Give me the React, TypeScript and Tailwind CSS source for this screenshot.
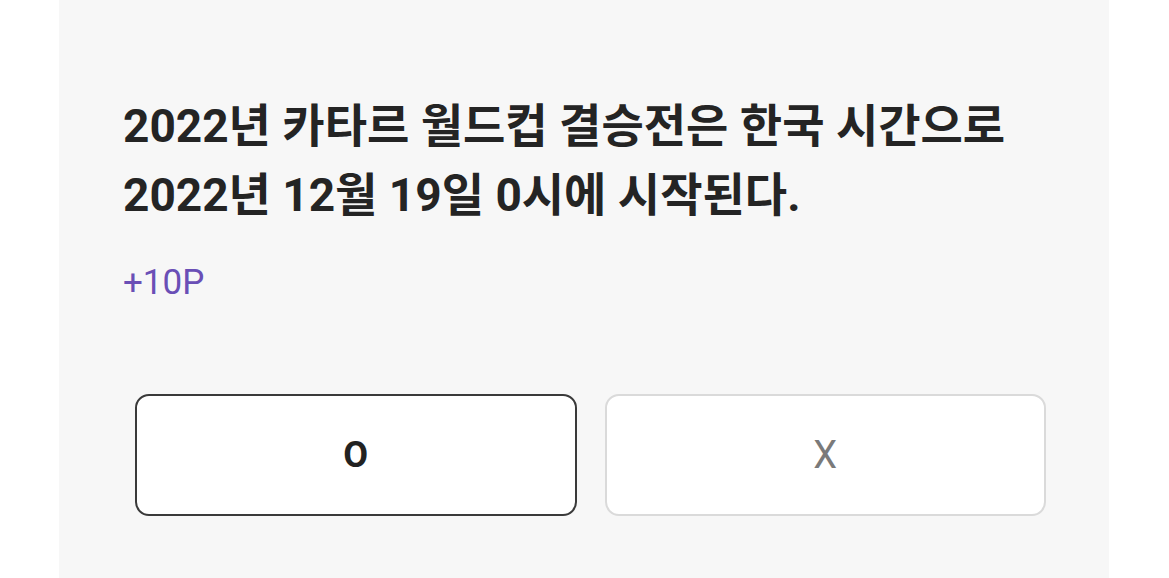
export default function App() {
  return (
    <div className="w-full h-[578px] bg-white flex justify-center">
      <div
        className="w-[1050px] h-full bg-[#f7f7f7] pt-[92px] pl-[64px] pr-[63px] ml-[-1px]"
        style={{ fontFamily: 'Roboto, "Noto Sans CJK KR", sans-serif' }}
      >
        {/* Question */}
        <h1 className="text-[46px] leading-[69px] font-bold text-[#242424] whitespace-nowrap">
          <span className="block">2022년 카타르 월드컵 결승전은 한국 시간으로</span>
          <span className="block">2022년 12월 19일 0시에 시작된다.</span>
        </h1>

        <p className="mt-[33px] text-[35px] leading-[40px] text-[#6a4fb6]">+10P</p>

        {/* Answer buttons */}
        <div className="mt-[91px] pl-[12px] flex gap-[28px]">
          <button className="w-[442px] h-[122px] rounded-[14px] border-2 border-[#3a3a3a] bg-white text-[36px] font-bold text-[#222]">
            O
          </button>
          <button className="w-[442px] h-[122px] rounded-[14px] border-2 border-[#dadada] bg-white text-[38px] text-[#7a7a7a]">
            X
          </button>
        </div>
      </div>
    </div>
  )
}
